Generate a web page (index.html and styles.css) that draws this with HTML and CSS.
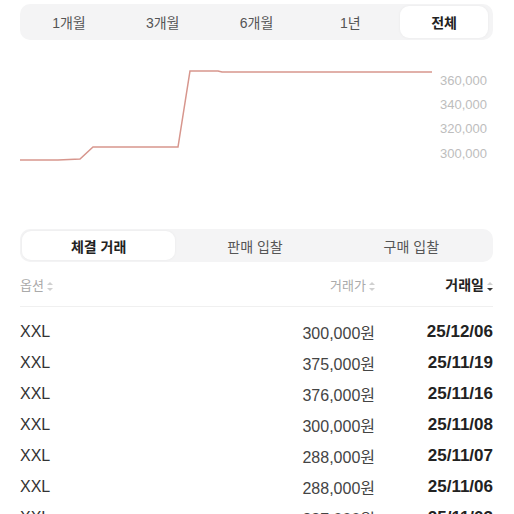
FILE: index.html
```html
<!DOCTYPE html>
<html lang="ko">
<head>
    <meta charset="UTF-8">
    <meta name="viewport" content="width=device-width, initial-scale=1.0">
    <title>시세</title>
    <link rel="stylesheet" href="styles.css">
</head>
<body>
    <div class="page">
        <div class="segment period">
            <button>1개월</button>
            <button>3개월</button>
            <button>6개월</button>
            <button>1년</button>
            <button class="active">전체</button>
        </div>

        <svg class="chart" width="474" height="189" viewBox="0 0 474 189">
            <polyline points="0,120 38,120 60,119 73,107 158,107 170,31 198,31 202,32 412,32"
                      fill="none" stroke="#d7968d" stroke-width="1.5" />
            <g class="axis">
                <text x="420" y="45">360,000</text>
                <text x="420" y="69">340,000</text>
                <text x="420" y="93">320,000</text>
                <text x="420" y="118">300,000</text>
            </g>
        </svg>

        <div class="segment trade">
            <button class="active">체결 거래</button>
            <button>판매 입찰</button>
            <button>구매 입찰</button>
        </div>

        <div class="table-head">
            <span class="col-opt">옵션<i class="sort"></i></span>
            <span class="col-price">거래가<i class="sort"></i></span>
            <span class="col-date current">거래일<i class="sort down"></i></span>
        </div>

        <div class="rows">
            <div class="row"><span>XXL</span><span class="price">300,000원</span><span class="date">25/12/06</span></div>
            <div class="row"><span>XXL</span><span class="price">375,000원</span><span class="date">25/11/19</span></div>
            <div class="row"><span>XXL</span><span class="price">376,000원</span><span class="date">25/11/16</span></div>
            <div class="row"><span>XXL</span><span class="price">300,000원</span><span class="date">25/11/08</span></div>
            <div class="row"><span>XXL</span><span class="price">288,000원</span><span class="date">25/11/07</span></div>
            <div class="row"><span>XXL</span><span class="price">288,000원</span><span class="date">25/11/06</span></div>
            <div class="row"><span>XXL</span><span class="price">287,000원</span><span class="date">25/11/03</span></div>
        </div>
    </div>
</body>
</html>
```

FILE: styles.css
```css
body {
    margin: 0;
    background: #fff;
    font-family: 'Liberation Sans', 'Noto Sans CJK KR', sans-serif;
    color: #222;
    overflow: hidden;
}

.page {
    padding: 4px 21px 0 20px;
}

.segment {
    display: grid;
    background: #f4f4f5;
    border-radius: 10px;
    padding: 2px;
}

.segment button {
    border: none;
    background: none;
    font-family: inherit;
    font-size: 14px;
    color: #555;
    border-radius: 9px;
    padding: 0;
}

.segment button.active {
    background: #fff;
    color: #222;
    font-weight: bold;
    box-shadow: 0 0 3px rgba(0,0,0,0.05);
}

.period {
    grid-template-columns: repeat(5, 1fr);
    height: 32px;
}

.period button {
    margin: 0 3px;
}

.trade {
    grid-template-columns: repeat(3, 1fr);
    height: 29px;
}

.trade button {
    margin-right: 3px;
}

.chart {
    display: block;
}

.axis text {
    font-family: 'Liberation Sans', sans-serif;
    font-size: 13px;
    fill: #bdbdbd;
}

.table-head {
    display: grid;
    grid-template-columns: 1fr 140px 118px;
    align-items: center;
    height: 44px;
    border-bottom: 1px solid #f0f0f0;
    font-size: 13px;
    color: #aaa;
}

.table-head .col-price,
.table-head .col-date {
    text-align: right;
}

.table-head .current {
    color: #222;
    font-weight: bold;
    font-size: 14px;
}

.sort {
    display: inline-block;
    position: relative;
    width: 6px;
    height: 9px;
    margin-left: 3px;
    vertical-align: -1px;
}

.sort::before,
.sort::after {
    content: '';
    position: absolute;
    left: 0;
    border-left: 3px solid transparent;
    border-right: 3px solid transparent;
}

.sort::before {
    top: 0;
    border-bottom: 3.5px solid #d0d0d0;
}

.sort::after {
    bottom: 0;
    border-top: 3.5px solid #d0d0d0;
}

.sort.down::after {
    border-top-color: #333;
}

.rows {
    padding-top: 9px;
}

.row {
    display: grid;
    grid-template-columns: 1fr 140px 118px;
    align-items: center;
    height: 31px;
    font-size: 16px;
    color: #333;
}

.row .price {
    text-align: right;
    color: #444;
}

.row .date {
    text-align: right;
    font-weight: bold;
    font-size: 17px;
    color: #222;
}
```
